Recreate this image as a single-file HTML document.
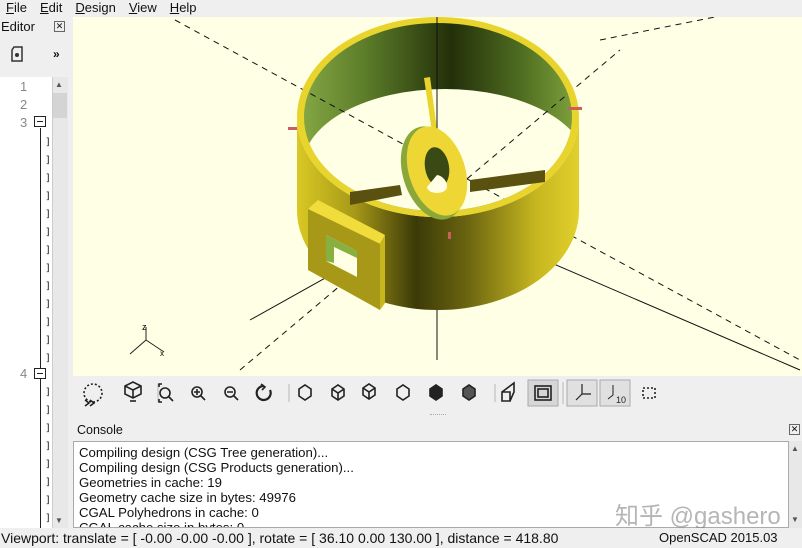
<!DOCTYPE html>
<html><head><style>
*{margin:0;padding:0;box-sizing:border-box}
body{width:802px;height:548px;overflow:hidden;background:#efefef;font-family:"Liberation Sans","DejaVu Sans",sans-serif;font-size:13px;color:#111;position:relative}
.abs{position:absolute}
.menu span{margin-right:13px}
.console div{line-height:15px;font-size:13.2px}
</style></head><body>
<div class="abs menu" style="left:6px;top:0;height:17px;line-height:16px;font-size:13px"><span><u>F</u>ile</span><span><u>E</u>dit</span><span><u>D</u>esign</span><span><u>V</u>iew</span><span><u>H</u>elp</span></div>
<div class="abs" style="left:1px;top:19px;font-size:13px">Editor</div>
<div class="abs" style="left:54px;top:21px;width:11px;height:11px;border:1px solid #666;font-size:9px;line-height:9px;text-align:center">✕</div>
<svg class="abs" style="left:10px;top:46px" width="14" height="16"><path d="M4 1h8v14H2V4z" fill="none" stroke="#333" stroke-width="1.5"/><circle cx="7" cy="9" r="2" fill="#333"/></svg>
<div class="abs" style="left:53px;top:47px;font-size:12px;font-weight:bold">»</div>
<div class="abs" style="left:0;top:77px;width:53px;height:452px;background:#fff"></div>
<div class="abs" style="left:52px;top:77px;width:16px;height:452px;background:#e8e8e8;border-left:1px solid #ccc"></div>
<div class="abs" style="left:53px;top:93px;width:14px;height:25px;background:#d4d4d4"></div>
<div class="abs" style="left:55px;top:80px;font-size:8px;color:#555">▲</div>
<div class="abs" style="left:55px;top:516px;font-size:8px;color:#555">▼</div>
<div class="abs" style="left:20px;top:78px;color:#888;line-height:18px;font-size:13px">1<br>2<br>3</div>
<div class="abs" style="left:20px;top:366px;color:#888;font-size:13px">4</div>
<div class="abs" style="left:40px;top:128px;width:1px;height:400px;background:#222"></div>
<div class="abs" style="left:34px;top:116px;width:12px;height:11px;border:1px solid #222;background:#fff"><div style="margin:4px 2px;height:1px;background:#222"></div></div>
<div class="abs" style="left:34px;top:368px;width:12px;height:11px;border:1px solid #222;background:#fff"><div style="margin:4px 2px;height:1px;background:#222"></div></div>
<div class="abs" style="left:45px;top:134px;font-size:10px;line-height:18px;color:#222;font-family:'DejaVu Sans Mono',monospace">]<br>]<br>]<br>]<br>]<br>]<br>]<br>]<br>]<br>]<br>]<br>]<br>]</div>
<div class="abs" style="left:45px;top:384px;font-size:10px;line-height:18px;color:#222;font-family:'DejaVu Sans Mono',monospace">]<br>]<br>]<br>]<br>]<br>]<br>]<br>]</div>

<svg class="abs" style="left:73px;top:17px" width="729" height="359" viewBox="73 17 729 359">
<defs>
<linearGradient id="w" x1="297" x2="580" gradientUnits="userSpaceOnUse"><stop offset="0" stop-color="#d9c824"/><stop offset=".2" stop-color="#a89a18"/><stop offset=".42" stop-color="#3c3a08"/><stop offset=".6" stop-color="#6a6410"/><stop offset=".85" stop-color="#c8b820"/><stop offset="1" stop-color="#e2d02c"/></linearGradient>
<linearGradient id="g" x1="300" x2="575" gradientUnits="userSpaceOnUse"><stop offset="0" stop-color="#86a844"/><stop offset=".25" stop-color="#5a7a28"/><stop offset=".55" stop-color="#23300a"/><stop offset=".8" stop-color="#4e6c20"/><stop offset="1" stop-color="#7ea03c"/></linearGradient>
<clipPath id="ci"><ellipse cx="438" cy="117" rx="134" ry="94"/></clipPath>
</defs>
<rect x="73" y="17" width="729" height="359" fill="#ffffe5"/>
<g stroke="#111" stroke-width="1" stroke-dasharray="6,5" fill="none">
<path d="M175 20L800 360"/><path d="M240 370L620 50"/><path d="M600 40L800 0"/>
</g>
<g stroke="#111" stroke-width="1" fill="none"><path d="M437 17V360"/><path d="M440 215L800 370"/><path d="M438 215L250 320"/></g>
<path d="M297 117A141 100 0 0 0 579 117V210A141 100 0 0 1 297 210Z" fill="url(#w)"/>
<ellipse cx="438" cy="117" rx="141" ry="100" fill="#e8d42c"/>
<ellipse cx="438" cy="117" rx="134" ry="94" fill="url(#g)"/>
<ellipse cx="445" cy="166" rx="142" ry="77" fill="#ffffe5" clip-path="url(#ci)"/>
<g stroke="#111" stroke-width="1" stroke-dasharray="6,5" fill="none" clip-path="url(#ci)"><path d="M175 20L800 360"/><path d="M240 370L620 50"/></g>
<path d="M437 17V215" stroke="#111"/>
<path d="M350 192L400 185L402 195L350 205Z" fill="#5a5010"/>
<path d="M470 180L545 170L545 182L470 192Z" fill="#5a5010"/>
<path d="M424 78L430 77L437 130L432 132Z" fill="#e8d42c"/>
<ellipse cx="433" cy="173" rx="30" ry="48" transform="rotate(-18 433 173)" fill="#8aa83a"/>
<ellipse cx="437" cy="171" rx="28" ry="46" transform="rotate(-18 437 171)" fill="#eed634"/>
<ellipse cx="437" cy="167" rx="12" ry="20" transform="rotate(-10 437 167)" fill="#3a4a14"/>
<path d="M437 175a12 12 0 0 1 10 12a10 6 0 0 1-20 0z" fill="#ffffe5"/>
<path d="M308 209L318 200L385 235L380 244Z" fill="#f0dc3a"/>
<path d="M380 244L385 235L385 303L380 310Z" fill="#c8b61e"/>
<path d="M308 209L380 244L380 310L308 270Z" fill="#a89818"/>
<path d="M326 235L357 251L357 277L326 261Z" fill="#ffffe5"/>
<path d="M326 235L357 251L357 258L334 247L334 263L326 261Z" fill="#88b040"/>
<g fill="#c86060"><rect x="288" y="127" width="9" height="3"/><rect x="568" y="107" width="14" height="3"/><rect x="448" y="232" width="3" height="7"/></g>
<g stroke="#222" fill="none" stroke-width="1"><path d="M146 327V340L130 354M146 340L164 352"/></g>
<text x="142" y="330" font-size="9" font-family="Liberation Sans">z</text>
<text x="160" y="356" font-size="8" font-family="Liberation Sans">x</text>
</svg>

<svg class="abs" style="left:73px;top:376px" width="729" height="40" fill="none" stroke="#222" stroke-width="1.6">
<circle cx="20" cy="17" r="9" stroke-dasharray="2,2"/><path d="M12 24l4 3-4 3M17 24l4 3-4 3"/>
<path d="M52 10l8-4 8 4v8l-8 4-8-4z M52 10l8 4 8-4M60 14v8"/><path d="M57 25h6"/>
<path d="M85 8v18" stroke="#ccc"/>
<circle cx="92" cy="17" r="5"/><path d="M96 21l4 4M86 11v-3h3M86 23v3h3"/>
<circle cx="124" cy="16" r="5"/><path d="M128 20l4 4M121 16h6M124 13v6"/>
<circle cx="157" cy="16" r="5"/><path d="M161 20l4 4M154 16h6"/>
<path d="M197 14a7 7 0 1 1-6-4" stroke-width="2.2"/><path d="M188 8l4 3-3 3"/>
<path d="M216 8v18" stroke="#ccc"/>
<path d="M226 13l6-4 6 4v7l-6 4-6-4z"/>
<path d="M259 13l6-4 6 4v7l-6 4-6-4zM259 13l6 4 6-4M265 17v7"/>
<path d="M290 12l6-4 6 4v7l-6 4-6-4zM290 12l6 4 6-4M296 16v7"/>
<path d="M324 13l6-4 6 4v7l-6 4-6-4z"/>
<path d="M357 13l6-4 6 4v7l-6 4-6-4z" fill="#222"/>
<path d="M390 13l6-4 6 4v7l-6 4-6-4z" fill="#555"/>
<path d="M422 8v18" stroke="#ccc"/>
<path d="M429 16h8v9h-8zM429 16l12-9v9l-4 9"/>
<rect x="455" y="4" width="30" height="26" fill="#d6d6d6" stroke="#aaa" stroke-width="1"/><rect x="462" y="10" width="16" height="14"/><rect x="465" y="13" width="10" height="8"/>
<path d="M490 6v22" stroke="#ccc"/>
<rect x="494" y="4" width="30" height="26" fill="#e0e0e0" stroke="#aaa" stroke-width="1"/><path d="M509 8v10l-6 6M509 18h9" stroke-width="1.2"/>
<rect x="527" y="4" width="30" height="26" fill="#e0e0e0" stroke="#aaa" stroke-width="1"/><path d="M540 9v10l-5 4" stroke-width="1"/><text x="543" y="27" font-size="9" fill="#222" stroke="none" font-family="Liberation Sans">10</text>
<rect x="570" y="12" width="12" height="10" stroke-dasharray="2,2"/>
</svg>

<div class="abs" style="left:430px;top:414px;width:16px;border-top:1px dotted #aaa"></div>
<div class="abs" style="left:77px;top:423px;font-size:12.5px">Console</div>
<div class="abs" style="left:789px;top:424px;width:11px;height:11px;border:1px solid #666;font-size:9px;line-height:9px;text-align:center">✕</div>
<div class="abs console" style="left:73px;top:441px;width:716px;height:87px;background:#fff;border:1px solid #aaa;padding:3px 5px;overflow:hidden">
<div>Compiling design (CSG Tree generation)...</div>
<div>Compiling design (CSG Products generation)...</div>
<div>Geometries in cache: 19</div>
<div>Geometry cache size in bytes: 49976</div>
<div>CGAL Polyhedrons in cache: 0</div>
<div>CGAL cache size in bytes: 0</div>
</div>
<div class="abs" style="left:789px;top:441px;width:13px;height:87px;background:#e8e8e8"></div>
<div class="abs" style="left:791px;top:444px;font-size:8px;color:#555">▲</div>
<div class="abs" style="left:791px;top:515px;font-size:8px;color:#555">▼</div>
<div class="abs" style="left:615px;top:496px;font-size:24px;color:rgba(120,120,120,.55);font-family:'Liberation Sans','Noto Sans CJK SC',sans-serif">知乎 @gashero</div>
<div class="abs" style="left:0;top:528px;width:802px;height:20px;background:#efefef;font-size:14px;line-height:20px;padding-left:1px">Viewport: translate = [ -0.00 -0.00 -0.00 ], rotate = [ 36.10 0.00 130.00 ], distance = 418.80<span style="position:absolute;left:659px;font-size:13px">OpenSCAD 2015.03</span></div>
</body></html>
